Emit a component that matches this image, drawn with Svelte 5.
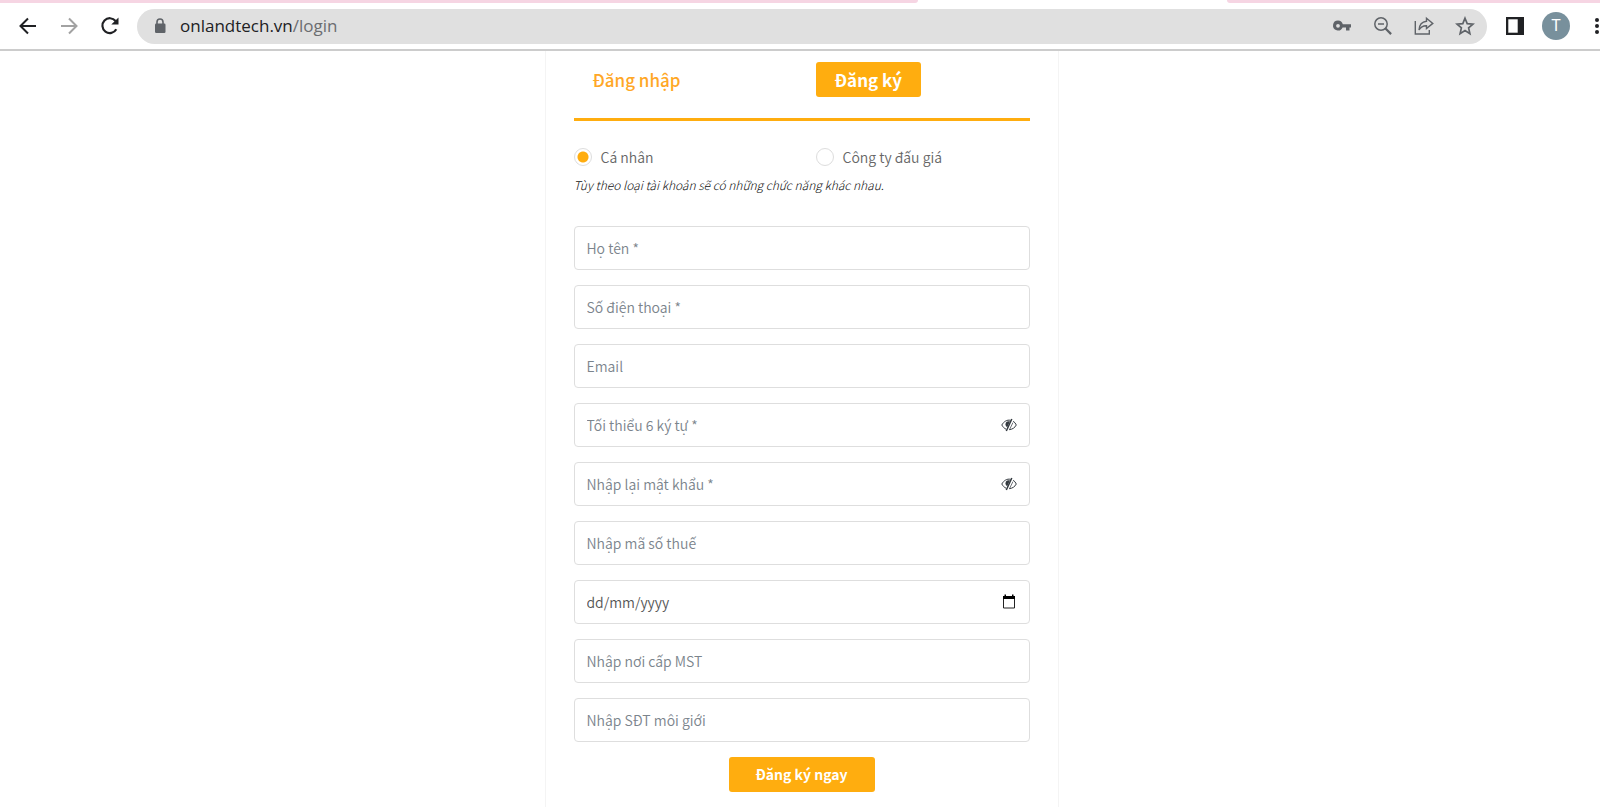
<script>
    let accountType = $state('personal');
    let shown = $state({password: false, confirm: false});

    const fields = [
        {id: 'name', placeholder: 'Họ tên *', type: 'text'},
        {id: 'phone', placeholder: 'Số điện thoại *', type: 'tel'},
        {id: 'email', placeholder: 'Email', type: 'email'},
        {id: 'password', placeholder: 'Tối thiểu 6 ký tự *', type: 'password'},
        {id: 'confirm', placeholder: 'Nhập lại mật khẩu *', type: 'password'},
        {id: 'tax', placeholder: 'Nhập mã số thuế', type: 'text'},
        {id: 'date', placeholder: 'dd/mm/yyyy', type: 'date'},
        {id: 'place', placeholder: 'Nhập nơi cấp MST', type: 'text'},
        {id: 'broker', placeholder: 'Nhập SĐT môi giới', type: 'tel'}
    ];

    function inputType(field) {
        if (field.type === 'password') return shown[field.id] ? 'text' : 'password';
        return field.type === 'date' ? 'text' : field.type;
    }
</script>

<div class="window">
    <header>
        <div class="tabstrip">
            <span class="left"></span>
            <span class="active"></span>
            <span class="right"></span>
        </div>
        <nav class="toolbar">
            <button class="icon" aria-label="Back">
                <svg width="18" height="18" viewBox="0 0 18 18" fill="none" stroke="#202124" stroke-width="2"><path d="M17 9H2M9 1.5 1.5 9 9 16.5"/></svg>
            </button>
            <button class="icon" aria-label="Forward">
                <svg width="18" height="18" viewBox="0 0 18 18" fill="none" stroke="#a2a2a2" stroke-width="2"><path d="M1 9h15M9 1.5 16.5 9 9 16.5"/></svg>
            </button>
            <button class="icon reload" aria-label="Reload">
                <svg width="20" height="20" viewBox="0 0 20 20"><path d="M16.3 13.2A7.4 7.4 0 1 1 15.6 5" fill="none" stroke="#202124" stroke-width="2.2"/><path d="M18.5 1.4v7.2h-7.2z" fill="#202124"/></svg>
            </button>
            <div class="address">
                <svg width="12" height="16" viewBox="0 0 12 16"><path d="M3 6V4a3 3 0 0 1 6 0v2" fill="none" stroke="#5f6368" stroke-width="1.6"/><rect x="1" y="5.5" width="10.5" height="9.5" rx="1.2" fill="#5f6368"/></svg>
                <div class="url" role="textbox" tabindex="0" aria-label="Address" contenteditable="true" spellcheck="false">onlandtech.vn<span>/login</span></div>
                <button class="icon" aria-label="Passwords">
                    <svg width="20" height="20" viewBox="0 0 20 20" fill="#5f6368"><path fill-rule="evenodd" d="M6 4.5a5 5 0 1 0 4.6 7H14v3h3.5v-3H19V8.3h-8.2A5 5 0 0 0 6 4.500zm0 3.400a1.900 1.900 0 1 1 0 3.800 1.900 1.900 0 0 1 0-3.800z"/></svg>
                </button>
                <button class="icon" aria-label="Zoom">
                    <svg width="20" height="20" viewBox="0 0 20 20" fill="none" stroke="#5f6368" stroke-width="1.5"><circle cx="8" cy="8" r="6.2"/><path d="M5 8h6"/><path d="m12.5 12.5 5.6 5.6" stroke-width="2.2"/></svg>
                </button>
                <button class="icon" aria-label="Share">
                    <svg width="20" height="20" viewBox="0 0 20 20" fill="none" stroke="#5f6368" stroke-width="1.4"><path d="M1.3 5v13h14v-4"/><path d="M12.5 2.2 18.8 7.4l-6.3 5.2V9.7C9 9.600 6.600 11 5 14c.3-4.600 3-8.200 7.500-8.700z"/></svg>
                </button>
                <button class="icon" aria-label="Bookmark">
                    <svg width="20" height="20" viewBox="0 0 20 20" fill="none" stroke="#5f6368" stroke-width="1.7"><path d="m10 2.200 2.200 5.400 5.800.5-4.400 3.800 1.300 5.700-4.900-3-4.900 3 1.300-5.700L2 8.100l5.800-.5z"/></svg>
                </button>
            </div>
            <button class="icon panel" aria-label="Side panel">
                <svg width="18" height="18" viewBox="0 0 18 18"><path d="M0 0h18v18H0z" fill="#202124"/><path d="M2.300 2.300h9.400v13.400H2.300z" fill="#fff"/></svg>
            </button>
            <button class="avatar">T</button>
            <button class="icon dots" aria-label="Menu">
                <svg width="6" height="18" viewBox="0 0 6 18" fill="#202124"><circle cx="3" cy="3" r="2"/><circle cx="3" cy="9" r="2"/><circle cx="3" cy="15" r="2"/></svg>
            </button>
        </nav>
    </header>

    <div class="page">
        <main>
            <div class="modes">
                <div><button class="mode">Đăng nhập</button></div>
                <div><button class="mode selected">Đăng ký</button></div>
            </div>

            <form onsubmit={(e) => e.preventDefault()}>
                <div class="types">
                    <label><input type="radio" name="type" value="personal" bind:group={accountType}>Cá nhân</label>
                    <label><input type="radio" name="type" value="company" bind:group={accountType}>Công ty đấu giá</label>
                </div>
                <p>Tùy theo loại tài khoản sẽ có những chức năng khác nhau.</p>

                {#each fields as field (field.id)}
                    <div class="field" class:date={field.type === 'date'}>
                        <input id={field.id} type={inputType(field)} placeholder={field.placeholder} aria-label={field.placeholder}>
                        {#if field.type === 'password'}
                            <button type="button" class="icon" aria-label="Hiện mật khẩu" onclick={() => shown[field.id] = !shown[field.id]}>
                                <svg width="16" height="14" viewBox="0 0 16 14" fill="none" stroke="#343a40">
                                    <path d="M9.500 2.300C6 1.500 2.800 3.500.8 7c1 1.900 2.400 3.300 4.200 4.200M12.200 3.200c1.300.8 2.300 2.100 3.100 3.800-1.500 2.800-3.900 4.400-7.200 4.700"/>
                                    <path d="M9 3.500C6.500 2.700 4.500 4 4.500 6.300c0 1.400.7 2.300 1.700 2.900z" fill="#343a40" stroke="none"/>
                                    <path d="M10.800 1 5.300 13" stroke-width="1.5"/>
                                    <path d="M12 4.500 8.800 11" stroke-width=".7"/>
                                </svg>
                            </button>
                        {:else if field.type === 'date'}
                            <button type="button" class="icon" aria-label="Chọn ngày">
                                <svg width="14" height="16" viewBox="0 0 14 16"><path d="M1.500 2.500h11v11.500h-11z" fill="none" stroke="#222"/><path d="M1 2h12v3H1zM2.500.5H4V2H2.500zM10 .5h1.500V2H10z" fill="#000"/></svg>
                            </button>
                        {/if}
                    </div>
                {/each}

                <button class="submit">Đăng ký ngay</button>
            </form>
        </main>
    </div>
</div>

<style>
    :global(body) {
        margin: 0;
        background-color: #fff;
    }

    .window {
        display: flex;
        flex-direction: column;
        min-height: 100vh;
        font-family: "Noto Sans CJK SC", "Noto Sans", sans-serif;
        color: #666;
    }

    button {
        font: inherit;
        padding: 0;
        border: none;
        background: none;
        cursor: pointer;
    }

    .tabstrip {
        display: flex;
        height: 3px;
    }

    .tabstrip span {
        background-color: #f6d5e3;
    }

    .tabstrip .left {
        flex: 918;
        border-bottom-right-radius: 4px;
    }

    .tabstrip .active {
        flex: 309;
        background-color: #fff;
    }

    .tabstrip .right {
        flex: 373;
        border-bottom-left-radius: 4px;
    }

    .toolbar {
        display: flex;
        align-items: center;
        height: 46px;
        padding-left: 18px;
        border-bottom: 2px solid #ccc;
        overflow: hidden;
    }

    .icon {
        display: flex;
        flex: none;
        align-items: center;
        justify-content: center;
        width: 20px;
        height: 20px;
    }

    .toolbar > .icon {
        margin-right: 21px;
    }

    .toolbar > .reload, .toolbar > .panel {
        margin-right: 17px;
    }

    .toolbar > .dots {
        width: 6px;
        margin-right: 0;
    }

    .address {
        display: flex;
        flex: 1;
        align-items: center;
        gap: 21px;
        height: 35px;
        margin-right: 18px;
        padding: 0 12px 0 17px;
        border-radius: 18px;
        background-color: #e0e0e0;
    }

    .url {
        flex: 1;
        margin-left: -7px;
        font: 17px/24px "Open Sans", sans-serif;
        color: #202124;
        outline: none;
    }

    .url span {
        color: #6b6d70;
    }

    .avatar {
        flex: none;
        width: 28px;
        height: 28px;
        margin-right: 24px;
        border-radius: 50%;
        background-color: #78909c;
        font: 16px/28px Roboto, sans-serif;
        color: #fff;
    }

    .page {
        display: flex;
        flex: 1;
        justify-content: center;
        padding-left: 3px;
    }

    main {
        box-sizing: border-box;
        width: 514px;
        padding: 11px 28px 15px;
        border: solid #f4f4f4;
        border-width: 0 1px;
    }

    .modes, .types {
        display: grid;
        grid-template-columns: 242px 1fr;
    }

    .modes {
        padding-bottom: 21px;
        border-bottom: 3px solid #ffad0f;
    }

    .mode {
        height: 35px;
        padding: 0 19px;
        border-radius: 3px;
        font-size: 17px;
        line-height: 34px;
        font-weight: 500;
        color: #ffa726;
    }

    .mode.selected {
        background-color: #ffad0f;
        font-weight: 700;
        color: #fff;
    }

    .types {
        margin-top: 24px;
    }

    .types label {
        display: flex;
        align-items: center;
        gap: 9px;
        font-size: 14px;
        line-height: 24px;
        font-weight: 350;
    }

    .types input {
        appearance: none;
        width: 18px;
        height: 18px;
        margin: 0;
        border: 1px solid #ddd;
        border-radius: 50%;
    }

    .types input:checked {
        background: radial-gradient(circle, #ffad0f 5px, transparent 6px);
    }

    p {
        margin: 6px 0 31px;
        font-size: 12px;
        line-height: 20px;
        font-weight: 300;
        font-style: italic;
        color: #111;
    }

    .field {
        display: flex;
        align-items: center;
        box-sizing: border-box;
        height: 44px;
        margin-bottom: 15px;
        padding-right: 10px;
        border: 1px solid #dedede;
        border-radius: 4px;
    }

    .field input {
        flex: 1;
        min-width: 0;
        height: 24px;
        padding: 0 12px;
        border: none;
        outline: none;
        background: none;
        font: inherit;
        font-size: 14px;
        line-height: 24px;
        font-weight: 350;
        color: #495057;
    }

    .field input::placeholder {
        color: #7b848c;
        opacity: 1;
    }

    .date input::placeholder {
        color: #555;
    }

    .submit {
        display: block;
        width: 146px;
        height: 35px;
        margin: 0 auto;
        border-radius: 3px;
        background-color: #ffad0f;
        font-size: 14px;
        line-height: 35px;
        font-weight: 700;
        color: #fff;
    }
</style>
